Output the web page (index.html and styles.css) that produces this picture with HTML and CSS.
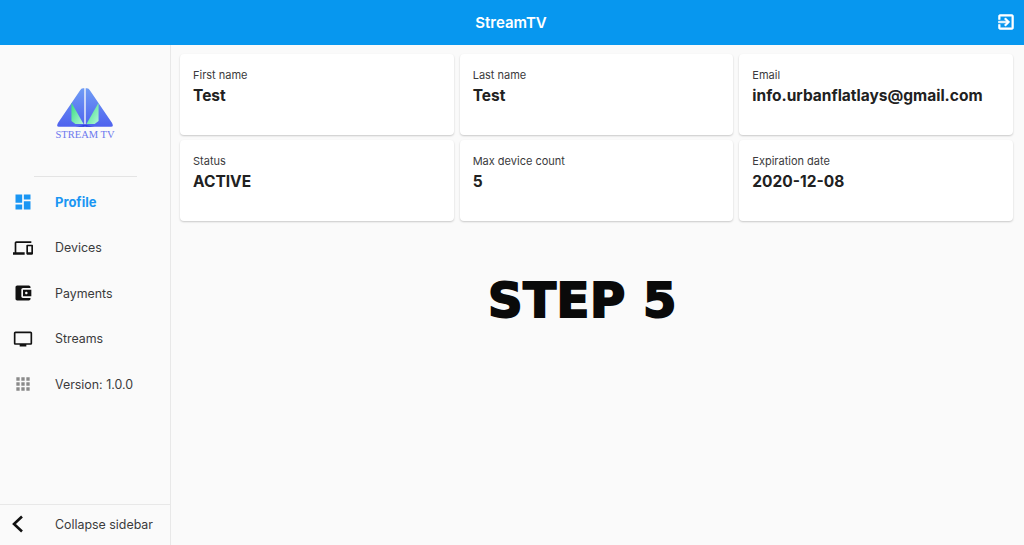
FILE: index.html
```html
<!DOCTYPE html>
<html lang="en">
<head>
    <meta charset="UTF-8">
    <title>StreamTV</title>
    <link rel="stylesheet" href="styles.css">
</head>
<body>
    <header class="topbar">
        <div class="topbar-title">StreamTV</div>
        <svg class="logout" viewBox="0 0 24 24" width="20" height="20">
            <path fill="#fff" stroke="#fff" stroke-width="0.7" d="M10.09 15.59 11.5 17l5-5-5-5-1.41 1.41L12.67 11H3v2h9.67l-2.58 2.59zM19 3H5c-1.11 0-2 .9-2 2v4h2V5h14v14H5v-4H3v4c0 1.1.89 2 2 2h14c1.1 0 2-.9 2-2V5c0-1.1-.9-2-2-2z"/>
        </svg>
    </header>

    <div class="layout">
        <aside class="sidebar">
            <div class="logo-box">
                <svg class="logo-mark" viewBox="0 0 60 44" width="58" height="43">
                    <defs>
                        <linearGradient id="wing" x1="0" y1="0" x2="0" y2="1">
                            <stop offset="0" stop-color="#6f9cf5"/>
                            <stop offset="1" stop-color="#4f62ee"/>
                        </linearGradient>
                        <linearGradient id="leaf" x1="0" y1="0" x2="1" y2="1">
                            <stop offset="0" stop-color="#35e07f"/>
                            <stop offset="1" stop-color="#b4f5d8"/>
                        </linearGradient>
                    </defs>
                    <path fill="url(#wing)" d="M28 1 L29.3 1 L29.3 41 L3 41 Q0 41 2 37 L25 3 Q26 1 28 1Z"/>
                    <path fill="url(#wing)" d="M32 1 L30.7 1 L30.7 41 L57 41 Q60 41 58 37 L35 3 Q34 1 32 1Z"/>
                    <path fill="url(#leaf)" d="M16 16 L28.5 38 L20 38 L16 35Z"/>
                    <path fill="url(#leaf)" d="M44 16 L31.5 38 L40 38 L44 35Z"/>
                    <path fill="#2f3fe0" d="M20 41 Q27 40 30 38 Q33 40 40 41Z"/>
                </svg>
                <div class="logo-text">STREAM TV</div>
            </div>
            <div class="sidebar-rule"></div>

            <nav class="nav">
                <div class="nav-item active">
                    <svg viewBox="0 0 24 24" width="20" height="20"><path fill="#1a96f3" d="M3 13h8V3H3v10zm0 8h8v-6H3v6zm10 0h8V11h-8v10zm0-18v6h8V3h-8z"/></svg>
                    <span>Profile</span>
                </div>
                <div class="nav-item">
                    <svg viewBox="0 0 24 24" width="20" height="20"><path fill="#111" d="M4 6h18V4H4c-1.1 0-2 .9-2 2v11H0v3h14v-3H4V6zm19 2h-6c-.55 0-1 .45-1 1v10c0 .55.45 1 1 1h6c.55 0 1-.45 1-1V9c0-.55-.45-1-1-1zm-1 9h-4v-7h4v7z"/></svg>
                    <span>Devices</span>
                </div>
                <div class="nav-item">
                    <svg viewBox="0 0 24 24" width="20" height="20"><path fill="#111" d="M21 18v1c0 1.1-.9 2-2 2H5c-1.11 0-2-.9-2-2V5c0-1.1.89-2 2-2h14c1.1 0 2 .9 2 2v1h-9c-1.11 0-2 .9-2 2v8c0 1.1.89 2 2 2h9zm-9-2h10V8H12v8zm4-2.5c-.83 0-1.5-.67-1.5-1.5s.67-1.5 1.5-1.5 1.5.67 1.5 1.5-.67 1.5-1.5 1.5z"/></svg>
                    <span>Payments</span>
                </div>
                <div class="nav-item">
                    <svg viewBox="0 0 24 24" width="20" height="20"><path fill="#111" d="M21 3H3c-1.1 0-2 .9-2 2v12c0 1.1.9 2 2 2h5v2h8v-2h5c1.1 0 1.99-.9 1.99-2L23 5c0-1.1-.9-2-2-2zm0 14H3V5h18v12z"/></svg>
                    <span>Streams</span>
                </div>
                <div class="nav-item">
                    <svg viewBox="0 0 24 24" width="20" height="20"><path fill="#8a8a8a" d="M4 4h4v4H4zM10 4h4v4h-4zM16 4h4v4h-4zM4 10h4v4H4zM10 10h4v4h-4zM16 10h4v4h-4zM4 16h4v4H4zM10 16h4v4h-4zM16 16h4v4h-4z"/></svg>
                    <span>Version: 1.0.0</span>
                </div>
            </nav>

            <div class="collapse">
                <svg viewBox="0 0 24 24" width="24" height="24"><path fill="none" stroke="#111" stroke-width="2.6" d="M16 4.5 8 12l8 7.5"/></svg>
                <span>Collapse sidebar</span>
            </div>
        </aside>

        <main class="content">
            <section class="cards">
                <div class="card"><div class="card-label">First name</div><div class="card-value">Test</div></div>
                <div class="card"><div class="card-label">Last name</div><div class="card-value">Test</div></div>
                <div class="card"><div class="card-label">Email</div><div class="card-value">info.urbanflatlays@gmail.com</div></div>
                <div class="card"><div class="card-label">Status</div><div class="card-value">ACTIVE</div></div>
                <div class="card"><div class="card-label">Max device count</div><div class="card-value">5</div></div>
                <div class="card"><div class="card-label">Expiration date</div><div class="card-value">2020-12-08</div></div>
            </section>
            <h1 class="step">STEP 5</h1>
        </main>
    </div>
</body>
</html>
```

FILE: styles.css
```css
* {
    box-sizing: border-box;
}

html, body {
    height: 100%;
}

body {
    margin: 0;
    display: flex;
    flex-direction: column;
    overflow: hidden;
    background: #fafafa;
    color: #3a3a3c;
    font-family: Inter, "Liberation Sans", sans-serif;
}

.topbar {
    height: 45px;
    flex: none;
    display: flex;
    align-items: center;
    justify-content: center;
    position: relative;
    background: #0797ef;
    color: #fff;
}

.topbar-title {
    font-size: 15px;
    font-weight: 600;
    margin-right: 2px;
}

.logout {
    position: absolute;
    right: 8px;
    top: 12px;
}

.layout {
    flex: 1;
    display: flex;
    min-height: 0;
}

.sidebar {
    width: 171px;
    flex: none;
    display: flex;
    flex-direction: column;
    border-right: 1px solid #e8e8e8;
}

.logo-box {
    height: 131px;
    padding-top: 42px;
    display: flex;
    flex-direction: column;
    align-items: center;
}

.logo-mark {
    display: block;
}

.logo-text {
    font-family: "Liberation Serif", serif;
    font-size: 10.5px;
    line-height: 9px;
    color: #6c78ee;
}

.sidebar-rule {
    height: 1px;
    margin: 0 33px 0 34px;
    background: #e4e4e4;
}

.nav {
    flex: 1;
    padding-top: 2.5px;
}

.nav-item {
    height: 45.5px;
    display: flex;
    align-items: center;
    gap: 22px;
    padding-left: 13px;
    font-size: 12.4px;
}

.nav-item.active {
    color: #1a96f3;
    font-size: 13px;
    font-weight: 700;
}

.collapse {
    height: 41px;
    flex: none;
    display: flex;
    align-items: center;
    gap: 25px;
    padding: 0 0 2px 6px;
    border-top: 1px solid #e8e8e8;
    font-size: 12.4px;
}

.content {
    flex: 1;
    min-width: 0;
    padding: 9px 11px 0 9px;
}

.cards {
    display: grid;
    grid-template-columns: repeat(3, 1fr);
    grid-auto-rows: 81px;
    gap: 5px 6px;
}

.card {
    padding: 14px 13px;
    background: #fff;
    border-radius: 4px;
    box-shadow: 0 1px 2px rgba(0, 0, 0, 0.2);
}

.card-label {
    font-size: 11px;
    line-height: 14px;
    margin-bottom: 4px;
}

.card-value {
    font-size: 15.5px;
    line-height: 20px;
    font-weight: 700;
    color: #212121;
}

.step {
    margin: 51px 0 0;
    padding-right: 28px;
    text-align: center;
    font-family: "DejaVu Sans", sans-serif;
    font-size: 48px;
    line-height: 56px;
    font-weight: 700;
    letter-spacing: 0.6px;
    color: #0a0a0a;
    -webkit-text-stroke: 2px #0a0a0a;
}
```
